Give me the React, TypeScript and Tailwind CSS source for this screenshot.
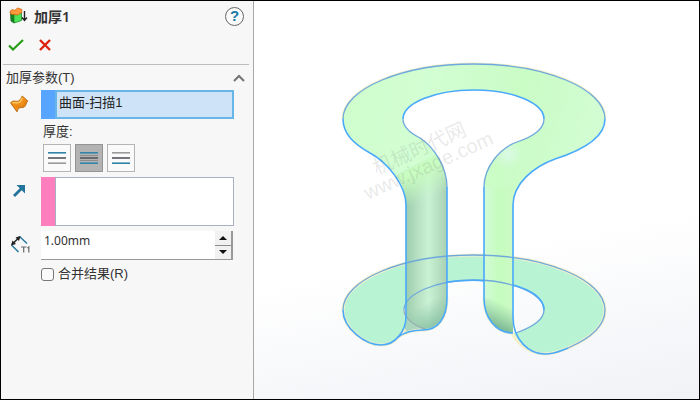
import { useState } from 'react'

type Side = 'top' | 'both' | 'bottom'

const sides: { id: Side; label: string; lines: [string, string, string] }[] = [
  { id: 'top', label: '加厚侧边1', lines: ['#2f84a8', '#55565a', '#9a9a9a'] },
  { id: 'both', label: '加厚两侧', lines: ['#2f84a8', '#55565a', '#2f84a8'] },
  { id: 'bottom', label: '加厚侧边2', lines: ['#9a9a9a', '#55565a', '#2f84a8'] },
]

function FeatureIcon() {
  return (
    <svg width="20" height="18" viewBox="0 0 20 18" aria-hidden="true">
      <path d="M1.500 5 5 7.500v8.500L2 14Z" fill="#168a24" stroke="#155d18" strokeWidth=".8" />
      <path d="M5 7.500 12.500 6v7.500L5 16Z" fill="#4fe35a" stroke="#168a24" strokeWidth=".8" />
      <path d="M1 5c1-2 2-3 3.500-2S7 2 8.500 1L13 2.500c-.5 1-.2 2 0 3C11 6 10.500 7.500 8 8 6 7.500 4 7.500 1.500 7Z" fill="#ff9a3c" stroke="#d0640c" strokeWidth=".8" />
      <path d="M15.500 4v9M13 10.500l2.500 3 2.500-3" fill="none" stroke="#222" strokeWidth="1.400" />
    </svg>
  )
}

function SurfaceIcon() {
  return (
    <svg width="20" height="18" viewBox="0 0 20 18" aria-hidden="true">
      <path d="M.6 8C3 4.500 6 7 8.500 6 11 5 11 2.500 12.300 1l5.500 5c-1.800 1.500-1.500 4.500-3.500 6-2 1.300-4-.2-5.800 1.500-.9.900-1 2.200-1.500 3.300Z" fill="#f08f18" stroke="#b5610a" strokeWidth=".9" strokeLinejoin="round" />
      <path d="M2.500 8.200c2.200-1.700 4.300.4 6.700-.8 2-1 2.200-3 3.300-4.500" fill="none" stroke="#ffc75e" strokeWidth="1.600" />
      <path d="M6 12.500c2.500-3 5 0 7.500-2 1.500-1.300 1.500-3.500 2.700-5" fill="none" stroke="#d97a10" strokeWidth=".9" />
    </svg>
  )
}

function ThicknessIcon() {
  return (
    <svg width="20" height="19" viewBox="0 0 20 19" aria-hidden="true">
      <path d="M9.500 1.500 17 8.500M1.500 10 8.500 17" fill="none" stroke="#2879a0" strokeWidth="1.500" />
      <path d="M2 9.500 9.500 2" stroke="#222" strokeWidth="1.500" />
      <path d="M1 10.500 2.500 5.500 6 9ZM10.500 1 5.500 2.500 9 6Z" fill="#222" />
      <path d="M11 12h5.500M13.700 12v5.500M17.500 13l1.300-1v5.500" fill="none" stroke="#686868" strokeWidth="1.200" />
    </svg>
  )
}

function Model() {
  return (
    <svg viewBox="0 0 445 398" className="block h-auto w-full" role="img" aria-label="曲面-扫描1">
      <defs>
        <linearGradient id="leg" x1="152" x2="193" y1="0" y2="0" gradientUnits="userSpaceOnUse">
          <stop offset="0" stopColor="#9bcdad" />
          <stop offset=".25" stopColor="#b4debf" />
          <stop offset=".55" stopColor="#c9f1d4" />
          <stop offset="1" stopColor="#a8d1b4" />
        </linearGradient>
        <linearGradient id="legFade" x1="170" x2="182" y1="168" y2="194" gradientUnits="userSpaceOnUse">
          <stop offset="0" stopColor="#c8fcc0" />
          <stop offset="1" stopColor="#c8fcc0" stopOpacity="0" />
        </linearGradient>
        <linearGradient id="slim" x1="230" x2="259" y1="0" y2="0" gradientUnits="userSpaceOnUse">
          <stop offset="0" stopColor="#d2fbd6" />
          <stop offset=".5" stopColor="#c6fcbf" />
          <stop offset="1" stopColor="#ccfac4" />
        </linearGradient>
        <linearGradient id="slimFoot" x1="248" x2="238" y1="302" y2="322" gradientUnits="userSpaceOnUse">
          <stop offset="0" stopColor="#8cc79d" stopOpacity="0" />
          <stop offset="1" stopColor="#83bd98" />
        </linearGradient>
        <linearGradient id="legFoot" x1="168" x2="178" y1="304" y2="325" gradientUnits="userSpaceOnUse">
          <stop offset="0" stopColor="#8fc5a8" stopOpacity="0" />
          <stop offset="1" stopColor="#8bc3a5" stopOpacity=".9" />
        </linearGradient>
        <linearGradient id="ringTop" x1="90" x2="350" y1="80" y2="150" gradientUnits="userSpaceOnUse">
          <stop offset="0" stopColor="#cffdcb" />
          <stop offset=".3" stopColor="#d2fed3" />
          <stop offset=".65" stopColor="#cafcc5" />
          <stop offset="1" stopColor="#d3fdd5" />
        </linearGradient>
        <radialGradient id="shine" cx="254" cy="153" r="15" gradientUnits="userSpaceOnUse">
          <stop offset="0" stopColor="#dafae6" />
          <stop offset="1" stopColor="#dafae6" stopOpacity="0" />
        </radialGradient>
        <clipPath id="slimClip">
          <path d="M230 186c0-20 16-39 33-45 16-6 27-13 27-23h61c0 20-25 32-50 40-22 8-42 25-42 46v20h-29Z" />
        </clipPath>
      </defs>

      {/* lower ring */}
      <path
        d="M220 254C148 254 89 279 89 309c0 19 23 35 38 35 13 0 19-8 24-16 2-4 2-8 2-12-2-2-3-5-3-8 0-16 32-29 70-29s70 13 70 29c0 11-14 18-28 24h-4c7 13 19 20 33 20 10 0 15-3 23-6 21-9 37-21 37-38 0-30-59-54-131-54Z"
        fill="#b8f4d3"
      />
      <path d="M153 316c-1 9-4 15-9 20 11-7 19-7 28-7-9-3-16-8-19-13Z" fill="#a9d6bd" />

      {/* pale halo around the silhouettes */}
      <g fill="none" stroke="#f5f0cc" strokeWidth="3">
        <path d="M89 118c0-30 59-55 131-55s131 25 131 55" />
        <path d="M89 309c0-30 59-55 131-55s131 25 131 55c0 17-16 29-37 38-8 3-13 6-23 6-14 0-27-9-33-21" />
        <path d="M89 309c0 19 23 35 38 35 13 0 18-8 24-16M144 336c11-7 19-7 28-7" />
        <path d="M230 297c0 20 12 35 29 35M193 297c0 20-9 32-24 32" />
      </g>

      {/* upper ring with both legs */}
      <path
        d="M220 63C148 63 89 88 89 118c0 15 11 25 27 34 17 9 36 32 36 52v112c3 5 10 11 19 13 13-1 22-13 22-32V186c0-20-13-40-27-49-8-4-17-11-17-19 0-16 32-29 71-29s70 13 70 29c0 10-9 17-27 23-17 6-33 25-33 45v111c0 20 12 35 29 35V204c0-21 20-38 42-46 25-8 50-20 50-40 0-30-59-55-131-55Z"
        fill="url(#ringTop)"
      />
      <path d="M143 174c6 9 9 20 9 30v112c3 5 10 11 19 13 13-1 22-13 22-32V186c0-11-4-23-11-32Z" fill="url(#leg)" />
      <path d="M143 174c6 9 9 20 9 30h41v-18c0-11-4-23-11-32Z" fill="url(#legFade)" />
      <path d="M152 296h41c0 19-9 31-22 32-9-1-16-7-19-12Z" fill="url(#legFoot)" />
      <path d="M230 186v111c0 20 12 35 29 35V186Z" fill="url(#slim)" />
      <path d="M230 297c0 20 12 35 29 35v-32Z" fill="url(#slimFoot)" />
      <circle cx="254" cy="153" r="15" fill="url(#shine)" clipPath="url(#slimClip)" />

      <g fill="none" stroke="#6fa9dc" strokeWidth="1.300">
        <path d="M89 118c0-30 59-55 131-55s131 25 131 55" />
        <path d="M149 118c0 8 9 15 17 19 14 9 27 29 27 49" />
        <path d="M290 118c0 10-9 17-27 23-17 6-33 25-33 45" />
        <path d="M89 309c0-30 59-55 131-55s131 25 131 55c0 17-16 29-37 38" />
        <path d="M150 309c0-16 32-30 70-30s70 14 70 30c0 10-14 18-28 23" />
        <path d="M150 309c0 8 10 16 21 19" stroke="#9aacb5" />
      </g>
      <g fill="none" stroke="#49a9fb" strokeWidth="1.600">
        <path d="M89 118c0 15 11 25 27 34 17 9 36 32 36 52v112c0 13-10 28-25 28-15 0-38-16-38-35" />
        <path d="M149 118c0-16 32-29 71-29s70 13 70 29" />
        <path d="M351 118c0 20-25 32-50 40-22 8-42 25-42 46v112c0 23 16 37 32 37 10 0 15-3 23-6" />
        <path d="M193 186v111c0 20-9 32-24 32-10 0-18 2-25 7" />
        <path d="M230 186v111c0 20 12 35 29 35" />
        <path d="M193 281q27-3 37-1M259 284c19 5 31 14 31 25" />
      </g>
      <g fill="#777" fillOpacity=".17" fontFamily="'Liberation Sans', 'Noto Sans CJK SC', sans-serif" transform="rotate(-24 150 150)">
        <text x="115" y="161" fontSize="20">机械时代网</text>
        <text x="97" y="180" fontSize="20">www.jxage.com</text>
      </g>
    </svg>
  )
}

export default function App() {
  const [side, setSide] = useState<Side>('both')
  const [open, setOpen] = useState(true)
  const [merge, setMerge] = useState(false)
  const [thickness, setThickness] = useState(1)

  const step = (n: number) => setThickness((t) => Math.max(0, t + n))

  return (
    <div className="flex min-h-screen border border-black bg-white font-['Liberation_Sans','Noto_Sans_CJK_SC',sans-serif] text-[#333]">
      <aside className="w-[253px] shrink-0 border-r border-[#a8a8a8] bg-[#f7f7f7] pl-[2px]">
        <header className="flex h-7 items-center pt-[2px] pr-[9px] pl-[6px]">
          <FeatureIcon />
          <h1 className="ml-[5px] flex-1 font-['Noto_Sans','Noto_Sans_CJK_SC',sans-serif] text-[14px] font-semibold text-[#333]">加厚1</h1>
          <button aria-label="帮助" className="flex size-[19px] items-center justify-center rounded-full border border-[#666] bg-[#fafafa] text-[15px] font-bold text-[#1c7ba8]">
            ?
          </button>
        </header>

        <div className="flex h-[35px] items-center gap-[15px] pb-[4px] pl-[5px]">
          <button aria-label="确定">
            <svg width="16" height="14" viewBox="0 0 16 14"><path d="M1 7.500 5 11.500 15 2" fill="none" stroke="#299b17" strokeWidth="2.200" /></svg>
          </button>
          <button aria-label="取消">
            <svg width="12" height="12" viewBox="0 0 12 12"><path d="m1 1 10 10M11 1 1 11" fill="none" stroke="#dc230c" strokeWidth="2.400" /></svg>
          </button>
        </div>

        <section className="mr-[4px] border-t border-[#bdbdbd]">
          <button aria-expanded={open} onClick={() => setOpen(!open)} className="flex h-[25px] w-full items-center justify-between pr-[4px] pl-[3px] text-[13px]">
            加厚参数(T)
            <svg width="12" height="8" viewBox="0 0 12 8" className={open ? '' : 'rotate-180'}><path d="m1 7 5-5 5 5" fill="none" stroke="#777" strokeWidth="2.200" /></svg>
          </button>

          {open && (
            <div className="grid grid-cols-[38px_minmax(0,1fr)] pr-[15px]">
              <div className="pt-[5px] pl-[7px]"><SurfaceIcon /></div>
              <div className="flex h-[29px]">
                <div className="w-[14px] bg-[#57a5ff]" />
                <input aria-label="要加厚的曲面" readOnly value="曲面-扫描1" className="min-w-0 flex-1 border-2 border-[#68b5e7] bg-[#cee3f7] px-[2px] pb-[4px] text-[13px] text-[#222] outline-none" />
              </div>

              <fieldset className="col-start-2 pl-[2px]">
                <legend className="flex h-[25px] items-center text-[13px]">厚度:</legend>
                <div className="flex gap-[4px]">
                  {sides.map((s) => (
                    <button
                      key={s.id}
                      type="button"
                      aria-label={s.label}
                      aria-pressed={side === s.id}
                      onClick={() => setSide(s.id)}
                      className={`flex h-7 w-7 items-center justify-center border ${side === s.id ? 'border-[#949494] bg-[#b3b3b3]' : 'border-[#b5b5b5] bg-[#fafafa]'}`}
                    >
                      <svg width="18" height="14" viewBox="0 0 18 14">
                        {s.id === 'both' && <path d="M0 4.500H18M0 9.500H18" stroke="#8d8d8d" />}
                        {s.lines.map((c, i) => <path key={i} d={`M0 ${1.8 + i * 5.2}H18`} stroke={c} strokeWidth="1.600" />)}
                      </svg>
                    </button>
                  ))}
                </div>
              </fieldset>

              <div className="pt-[12px] pl-[10px]">
                <svg width="13" height="13" viewBox="0 0 13 13">
                  <path d="M1 12 9 4" stroke="#23749b" strokeWidth="2.800" />
                  <path d="M3.500 1H12v8.500L9.500 7 6 3.500Z" fill="#23749b" />
                </svg>
              </div>
              <div className="mt-[5px] flex h-[49px]">
                <div className="w-[14px] bg-[#ff7ebd]" />
                <textarea aria-label="方向" className="block min-w-0 flex-1 resize-none border border-[#aab0c2] bg-white outline-none" />
              </div>

              <div className="pt-[9px] pl-[7px]"><ThicknessIcon /></div>
              <div className="mt-[5px] mr-[1px] flex h-[29px] border-b border-[#999] bg-white">
                <input
                  aria-label="厚度"
                  value={`${thickness.toFixed(2)}mm`}
                  onChange={(e) => setThickness(parseFloat(e.target.value) || 0)}
                  className="min-w-0 flex-1 px-[3px] pb-[8px] font-['Noto_Sans',sans-serif] text-[12px] outline-none"
                />
                <div className="flex w-[18px] flex-col border-r-2 border-[#999] bg-[#f1f1f1]">
                  <button aria-label="增加" onClick={() => step(0.1)} className="flex flex-1 items-center justify-center border-b border-[#8c8c8c]">
                    <svg width="8" height="4" viewBox="0 0 8 4"><path d="M0 4 4 0l4 4Z" fill="#111" /></svg>
                  </button>
                  <button aria-label="减少" onClick={() => step(-0.1)} className="flex flex-1 items-center justify-center">
                    <svg width="8" height="4" viewBox="0 0 8 4"><path d="M0 0h8L4 4Z" fill="#111" /></svg>
                  </button>
                </div>
              </div>

              <label className="col-start-2 flex h-[28px] items-center gap-[4px] text-[13px]">
                <input type="checkbox" checked={merge} onChange={(e) => setMerge(e.target.checked)} className="size-[13px] appearance-none rounded-[3px] border border-[#777] bg-[#fafafa] checked:bg-[#23749b]" />
                合并结果(R)
              </label>
            </div>
          )}
        </section>
      </aside>

      <main className="min-w-0 flex-1 bg-linear-170 from-white from-60% to-[#f0f2f6]">
        <Model />
      </main>
    </div>
  )
}
